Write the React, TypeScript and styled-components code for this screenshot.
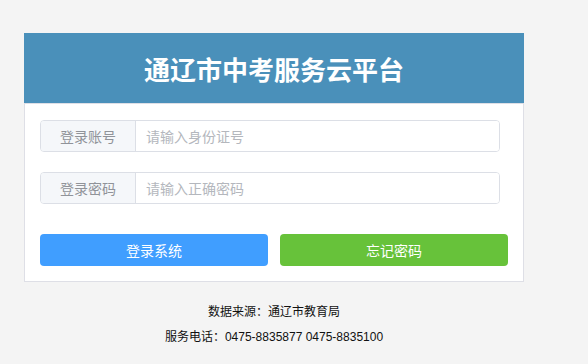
import React from "react";
import styled, { createGlobalStyle } from "styled-components";

const Global = createGlobalStyle`
  html, body { margin: 0; padding: 0; background: #f4f4f4; }
  body { font-family: "Liberation Sans", "Noto Sans CJK SC", sans-serif; }
  * { box-sizing: border-box; }
`;

const Page = styled.div`
  width: 500px;
  margin: 33px 0 0 24px;
`;

const Header = styled.div`
  height: 70px;
  background: #4a90ba;
  display: flex;
  align-items: center;
  justify-content: center;
`;

const Title = styled.h1`
  margin: 0;
  color: #fff;
  font-size: 26px;
  font-weight: bold;
  font-family: "Noto Sans CJK SC", sans-serif;
  letter-spacing: 0;
`;

const Body = styled.div`
  background: #fff;
  border: 1px solid #dedfe6;
  padding: 16px 15px 15px 15px;
  display: flex;
  flex-direction: column;
`;

const InputGroup = styled.div<{ $mb: number }>`
  width: 460px;
  height: 32px;
  display: flex;
  border: 1px solid #dcdfe6;
  border-radius: 4px;
  overflow: hidden;
  margin-bottom: ${(p) => p.$mb}px;
`;

const Prepend = styled.div`
  width: 95px;
  flex: none;
  background: #f5f7fa;
  border-right: 1px solid #dcdfe6;
  color: #909399;
  font-size: 14px;
  font-family: "Noto Sans CJK SC", sans-serif;
  display: flex;
  align-items: center;
  justify-content: center;
`;

const Input = styled.input`
  flex: 1;
  border: none;
  outline: none;
  padding: 0 10px;
  font-size: 14px;
  font-family: "Noto Sans CJK SC", sans-serif;
  color: #606266;
  background: #fff;
  &::placeholder { color: #b4b7bd; }
`;

const Buttons = styled.div`
  width: 468px;
  display: flex;
  gap: 12px;
`;

const Button = styled.button<{ $color: string }>`
  flex: 1;
  height: 32px;
  border: none;
  border-radius: 4px;
  background: ${(p) => p.$color};
  color: #fff;
  font-size: 14px;
  font-family: "Noto Sans CJK SC", sans-serif;
  cursor: pointer;
  padding: 0;
`;

const Footer = styled.div`
  margin-top: 18px;
  text-align: center;
  font-size: 12px;
  color: #111;
  line-height: 25px;
`;

export default function App() {
  return (
    <>
      <Global />
      <Page>
        <Header>
          <Title>通辽市中考服务云平台</Title>
        </Header>
        <Body>
          <InputGroup $mb={20}>
            <Prepend>登录账号</Prepend>
            <Input placeholder="请输入身份证号" />
          </InputGroup>
          <InputGroup $mb={30}>
            <Prepend>登录密码</Prepend>
            <Input type="password" placeholder="请输入正确密码" />
          </InputGroup>
          <Buttons>
            <Button $color="#409eff">登录系统</Button>
            <Button $color="#67c23a">忘记密码</Button>
          </Buttons>
        </Body>
        <Footer>
          <div>数据来源：通辽市教育局</div>
          <div>服务电话：0475-8835877 0475-8835100</div>
        </Footer>
      </Page>
    </>
  );
}
